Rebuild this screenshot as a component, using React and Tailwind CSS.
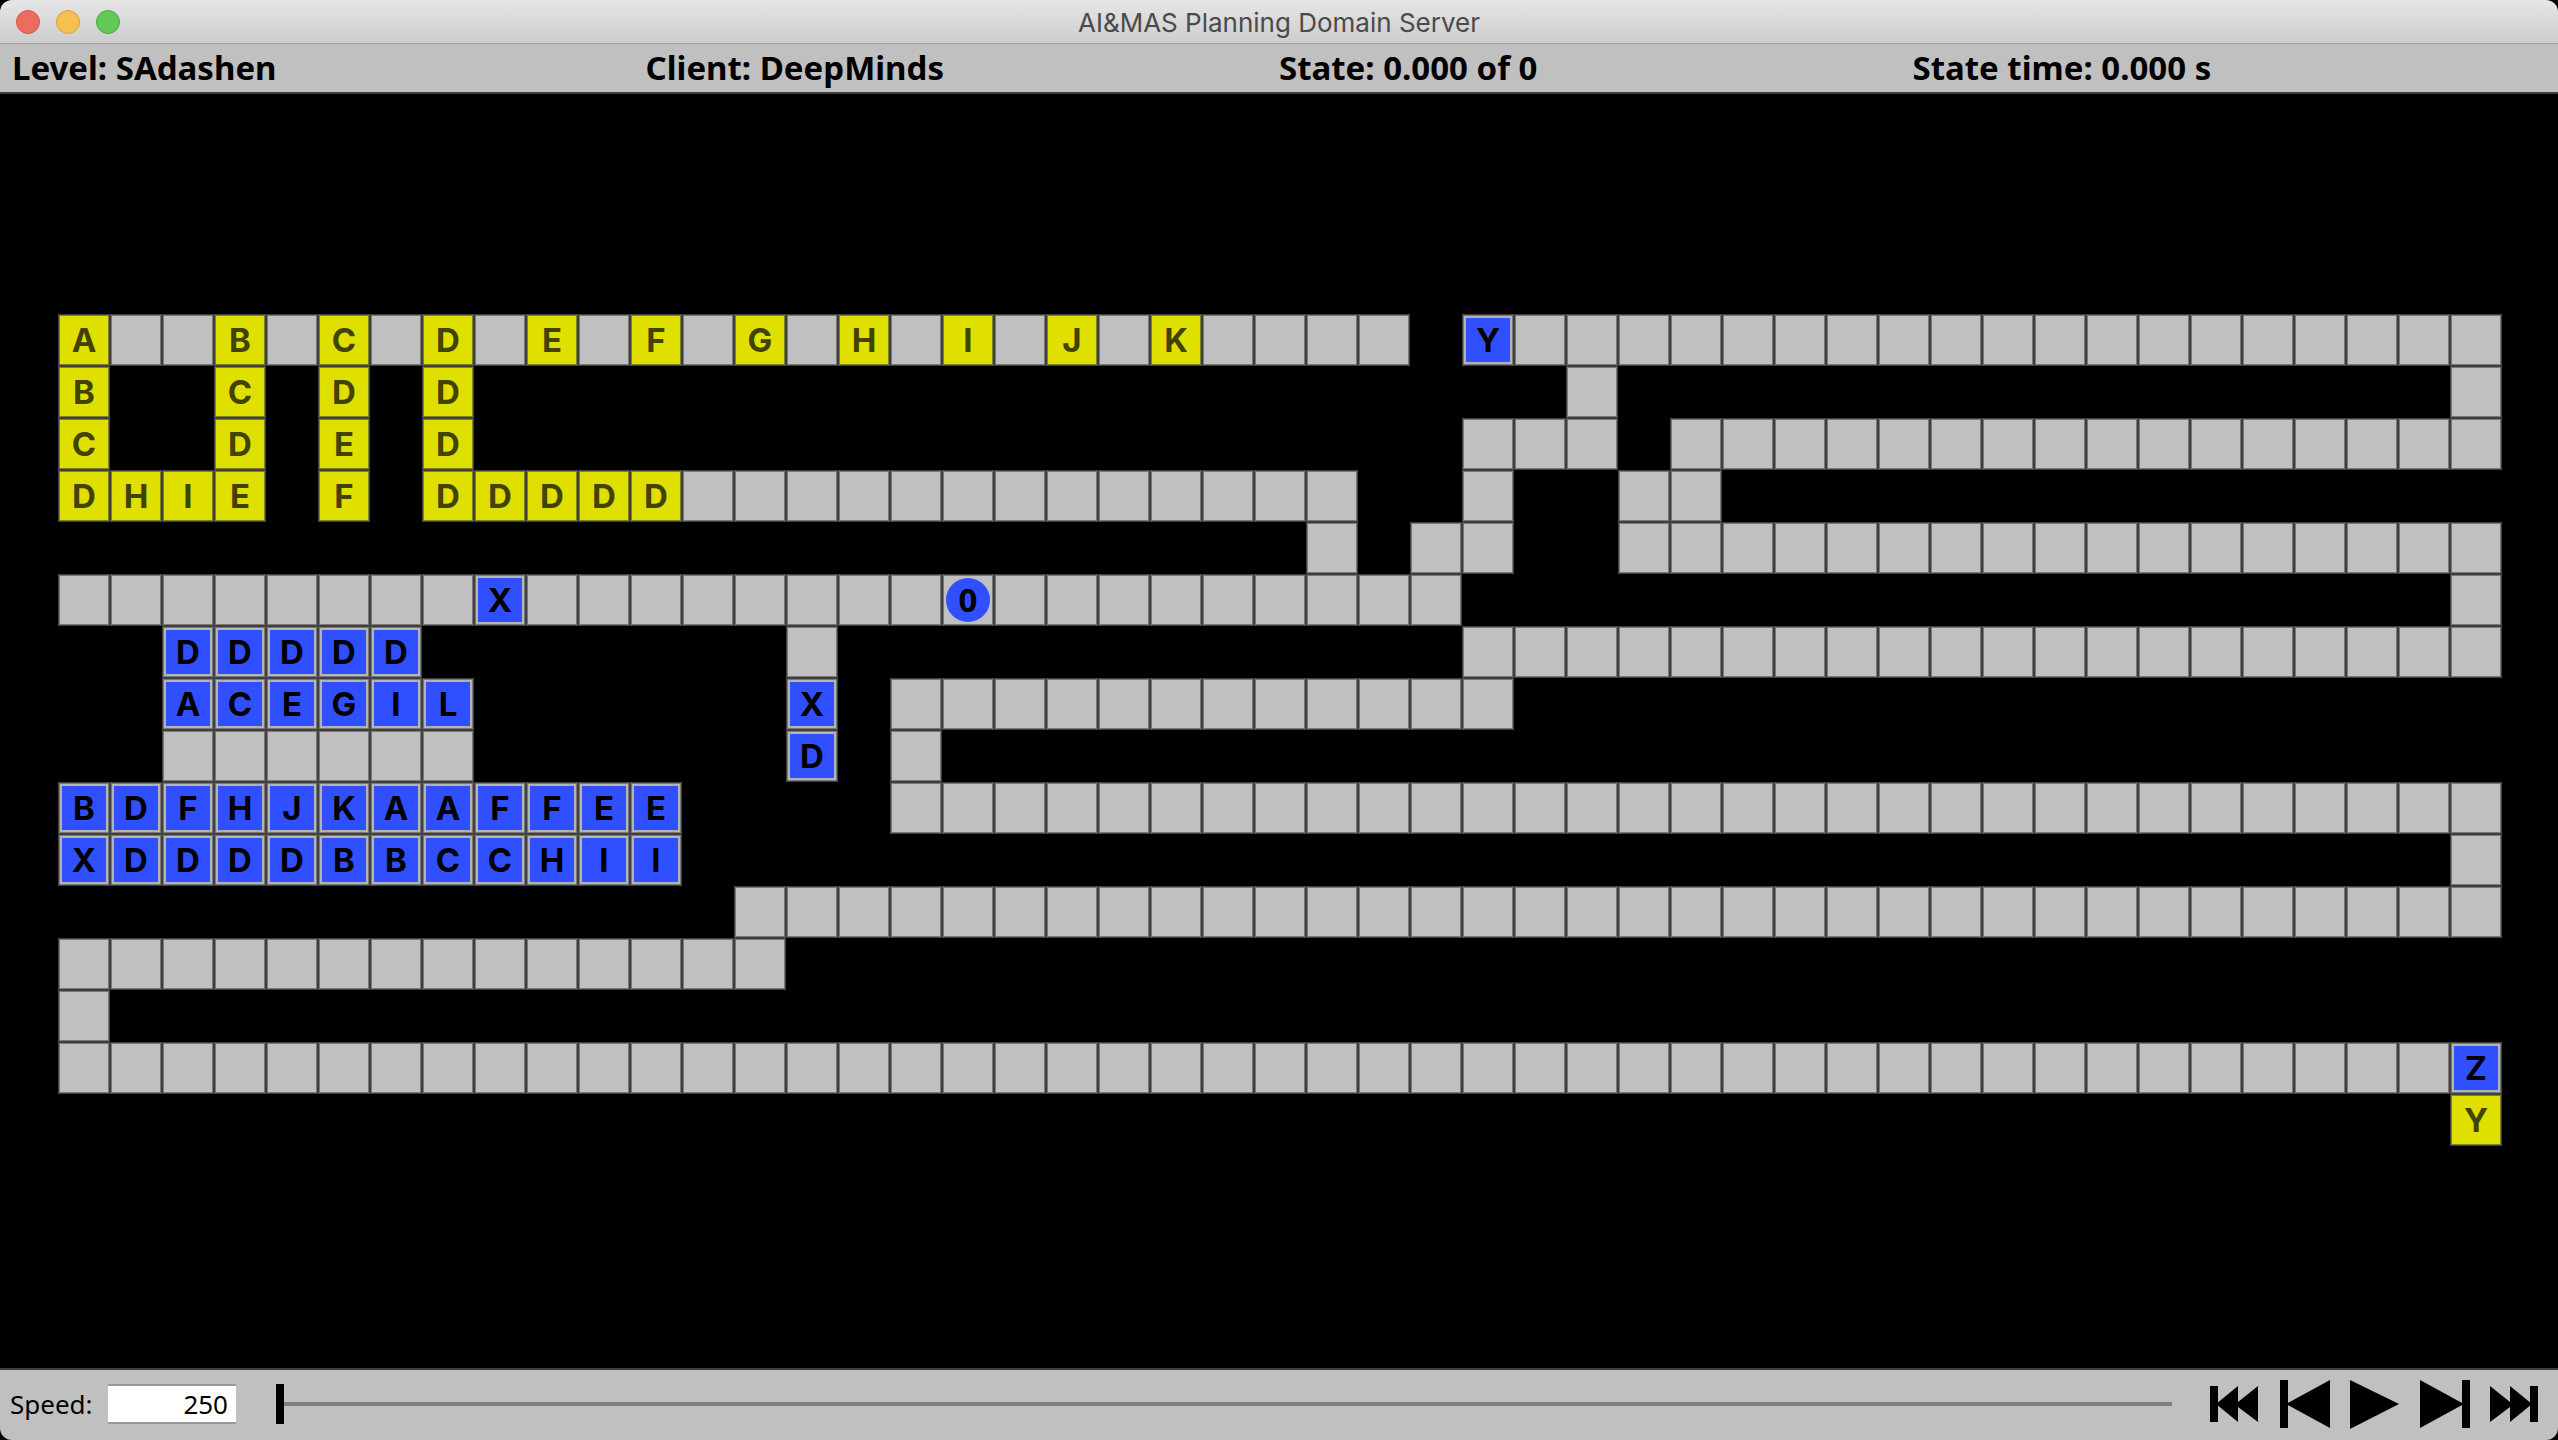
const f = (n) => '.'.repeat(n);
const w = (n) => ' '.repeat(n);

// '.' floor, ' ' wall, lowercase letter goal, uppercase letter box, '0' agent
const LEVEL = [
  'a..b.c.d.e.f.g.h.i.j.k' + f(4) + w(1) + 'Y' + f(19),
  'b  c d d' + w(21) + '.' + w(16) + '.',
  'c  d e d' + w(19) + '... ' + f(16),
  'dhie f ddddd' + f(13) + w(2) + '.' + w(2) + '..',
  w(24) + '. ..' + w(2) + f(17),
  f(8) + 'X' + f(8) + '0' + f(9) + w(19) + '.',
  '  DDDDD' + w(7) + '.' + w(12) + f(20),
  '  ACEGIL' + w(6) + 'X ' + f(12),
  '  ......' + w(6) + 'D .',
  'BDFHJKAAFFEE' + w(4) + f(31),
  'XDDDDBBCCHII' + w(34) + '.',
  w(13) + f(34),
  f(14),
  '.',
  f(46) + 'Z',
  w(46) + 'y',
];

const STATUS = ['Level: SAdashen', 'Client: DeepMinds', 'State: 0.000 of 0', 'State time: 0.000 s'];

function Cell({ value }) {
  if (value === ' ') return <div className="size-13" />;
  if (value === '.') {
    return <div className="size-13 border border-[#404040] bg-[#c0c0c0] inset-ring inset-ring-[#787878]" />;
  }
  if (value === '0') {
    return (
      <div className="size-13 border border-[#404040] bg-[#c0c0c0] p-[3px] inset-ring inset-ring-[#787878]">
        <div className="flex size-11 items-center justify-center rounded-full bg-[#3050ff] font-['Noto_Sans',sans-serif] text-black">
          0
        </div>
      </div>
    );
  }
  if (value === value.toLowerCase()) {
    return (
      <div className="flex size-13 items-center justify-center border border-[#404040] bg-[#dfdf00] text-[#434300] inset-ring inset-ring-[#80802a]">
        {value.toUpperCase()}
      </div>
    );
  }
  return (
    <div className="size-13 border border-[#404040] bg-[#b4b4b4] p-[3px] inset-ring inset-ring-[#787878]">
      <div className="flex size-11 items-center justify-center bg-[#3050ff] text-black">{value}</div>
    </div>
  );
}

const CONTROLS = [
  { label: 'Rewind to start', d: 'M2 17h8v36H2zM8 35 30 17v16L50 17v36L30 38v15z' },
  { label: 'Step back', d: 'M2 11h8v48H2zM8 35 52 11v48z' },
  { label: 'Play', d: 'M2 11 51 35 2 60z' },
  { label: 'Step forward', d: 'M2 11 46 35 2 59zM44 11h8v48h-8z' },
  { label: 'Skip to end', d: 'M2 17 22 33V17L44 35 22 53V38L2 53zM42 17h8v36h-8z' },
];

export default function App() {
  return (
    <div className="bg-black font-['Noto_Sans','Open_Sans',sans-serif]">
      <div className="flex h-screen min-h-[1100px] flex-col overflow-hidden rounded-xl bg-black">
        <header className="relative flex h-11 shrink-0 items-center justify-center border-b border-[#a0a0a0] bg-linear-to-b from-[#e6e6e6] to-[#cdcdcd]">
          <div className="absolute left-4 flex gap-4">
            <button aria-label="Close" className="size-6 rounded-full border border-[#d9534b] bg-[#ee6b60]" />
            <button aria-label="Minimize" className="size-6 rounded-full border border-[#dba03a] bg-[#f6c050]" />
            <button aria-label="Zoom" className="size-6 rounded-full border border-[#4fa73c] bg-[#64ca57]" />
          </div>
          <h1 className="pt-0.5 font-['Inter',sans-serif] text-[26px] leading-8 text-[#4a4a4a]">
            AI&amp;MAS Planning Domain Server
          </h1>
        </header>
        <div className="grid h-12 shrink-0 grid-cols-4 items-center bg-[#c0c0c0] px-3 text-[33px] leading-10 font-bold text-black">
          {STATUS.map((s) => (
            <span key={s}>{s}</span>
          ))}
        </div>
        <main className="flex flex-1 flex-col items-center justify-center border-y-2 border-[#404040] bg-black pb-0.5 pl-0.5 font-['Inter',sans-serif] text-[33px] leading-10 font-bold">
          {LEVEL.map((row, y) => (
            <div key={y} className="flex">
              {[...row.padEnd(47)].map((v, x) => (
                <Cell key={x} value={v} />
              ))}
            </div>
          ))}
        </main>
        <footer className="flex h-[70px] shrink-0 items-center bg-[#c0c0c0] pr-4 pb-0.5 pl-[10px] text-[26px] leading-9 text-black">
          <label htmlFor="speed" className="w-[98px]">
            Speed:
          </label>
          <input
            id="speed"
            defaultValue="250"
            className="h-10 w-32 border-y-2 border-[#999] bg-white pr-2 text-right"
          />
          <input
            type="range"
            aria-label="State"
            min="0"
            max="100"
            defaultValue="0"
            className="ml-10 h-10 flex-1 appearance-none bg-[linear-gradient(transparent_45%,#808080_45%,#808080_55%,transparent_55%)] [&::-webkit-slider-thumb]:h-10 [&::-webkit-slider-thumb]:w-2 [&::-webkit-slider-thumb]:appearance-none [&::-webkit-slider-thumb]:bg-black"
          />
          <div className="ml-9 flex gap-4">
            {CONTROLS.map(({ label, d }) => (
              <button key={label} aria-label={label} className="h-[68px] w-[54px]">
                <svg viewBox="0 1 54 68" className="h-[68px] w-[54px] fill-black">
                  <path d={d} />
                </svg>
              </button>
            ))}
          </div>
        </footer>
      </div>
    </div>
  );
}
